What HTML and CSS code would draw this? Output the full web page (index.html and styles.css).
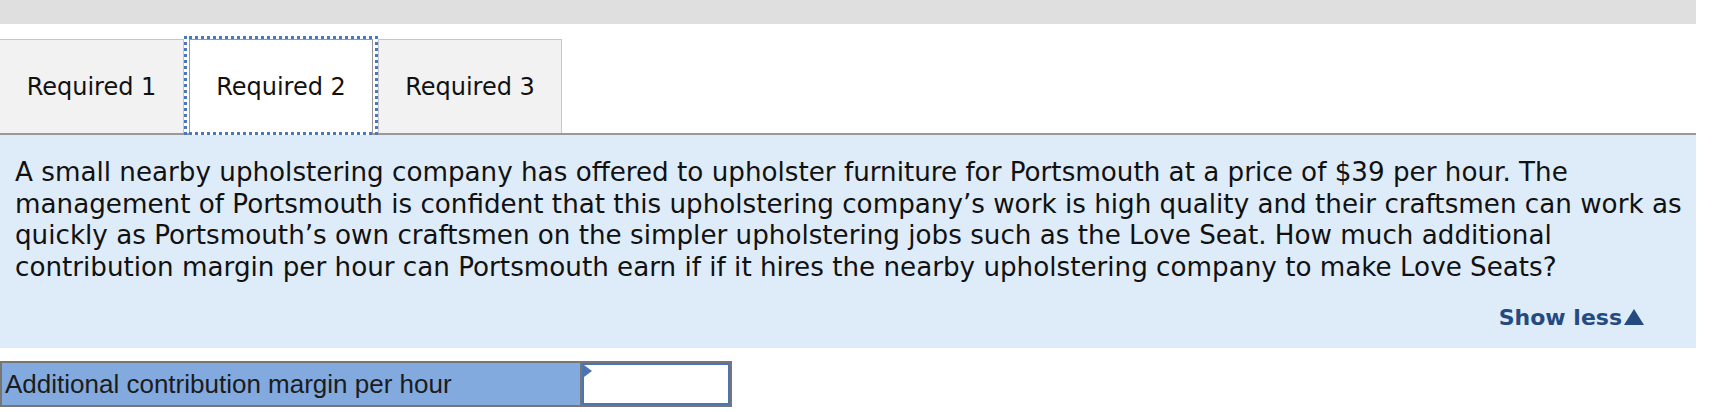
FILE: index.html
```html
<!DOCTYPE html>
<html lang="en">
<head>
<meta charset="utf-8">
<title>Required 2</title>
<link rel="stylesheet" href="styles.css">
</head>
<body>
<div class="page">
  <div class="topbar"></div>
  <div class="tabs">
    <div class="tab">Required 1</div>
    <div class="tab active">Required 2</div>
    <div class="tab">Required 3</div>
  </div>
  <div class="panel">
    <p class="question">A small nearby upholstering company has offered to upholster furniture for Portsmouth at a price of $39 per hour. The management of Portsmouth is confident that this upholstering company’s work is high quality and their craftsmen can work as quickly as Portsmouth’s own craftsmen on the simpler upholstering jobs such as the Love Seat. How much additional contribution margin per hour can Portsmouth earn if if it hires the nearby upholstering company to make Love Seats?</p>
    <div class="toggle-row"><a class="toggle" href="#">Show less<svg class="arrow" width="20" height="16" viewBox="0 0 20 16" aria-hidden="true"><path d="M10 0 L20 16 L0 16 Z" fill="#244a80"/></svg></a></div>
  </div>
  <div class="answer">
    <div class="answer-label">Additional contribution margin per hour</div>
    <div class="answer-cell"><div class="answer-input"></div></div>
  </div>
</div>
</body>
</html>
```
FILE: styles.css
```css
html, body {
  margin: 0;
  padding: 0;
  background: #ffffff;
}
.page {
  width: 1696px;
  font-family: "DejaVu Sans", Verdana, sans-serif;
  color: #111;
}
.topbar {
  height: 24px;
  background: #dfdfdf;
}
.tabs {
  display: flex;
  gap: 5px;
  margin-top: 15px;
  border-bottom: 2px solid #999999;
  align-items: flex-end;
}
.tab {
  box-sizing: border-box;
  width: 184px;
  height: 94px;
  display: flex;
  align-items: center;
  justify-content: center;
  background: #f2f2f2;
  border: 1px solid #c6c6c6;
  border-bottom: none;
  font-size: 24px;
  color: #111;
}
.tab:first-child {
  border-left: none;
}
.tab.active {
  position: relative;
  background: #ffffff;
  border-color: #999999;
  height: 96px;
  margin-bottom: -2px;
  padding-bottom: 2px;
  z-index: 1;
}
.tab.active::after {
  content: "";
  position: absolute;
  left: -6px;
  right: -6px;
  top: -4px;
  bottom: 0;
  border: 3px dotted #4a78c0;
}
.panel {
  background: #deebf8;
  height: 213px;
  box-sizing: border-box;
  padding: 22px 5px 18px 15px;
  display: flex;
  flex-direction: column;
}
.question {
  margin: 0;
  font-size: 26.2px;
  line-height: 31.5px;
}
.toggle-row {
  display: flex;
  justify-content: flex-end;
  padding-right: 47px;
  margin-top: auto;
}
.toggle {
  font-weight: bold;
  font-size: 22px;
  color: #244a80;
  text-decoration: none;
  display: flex;
  align-items: center;
  gap: 2px;
}
.arrow {
  display: block;
  margin-top: -2px;
}
.answer {
  display: flex;
  width: 732px;
  height: 46px;
  margin-top: 13px;
  box-sizing: border-box;
  border: 2px solid #767676;
}
.answer-label {
  width: 580px;
  background: #82aadf;
  border-right: 2px solid #767676;
  font-family: "Liberation Sans", Arial, sans-serif;
  font-size: 26px;
  color: #1c1c1c;
  display: flex;
  align-items: center;
  padding-left: 3px;
  box-sizing: border-box;
}
.answer-cell {
  flex: 1;
  position: relative;
}
.answer-input {
  box-sizing: border-box;
  height: 100%;
  background: #fff;
  border: 2px solid #4a74b4;
}
.answer-cell::before {
  content: "";
  position: absolute;
  left: 2px;
  top: 2px;
  border-top: 6px solid transparent;
  border-bottom: 6px solid transparent;
  border-left: 8px solid #4a74b4;
}
```
